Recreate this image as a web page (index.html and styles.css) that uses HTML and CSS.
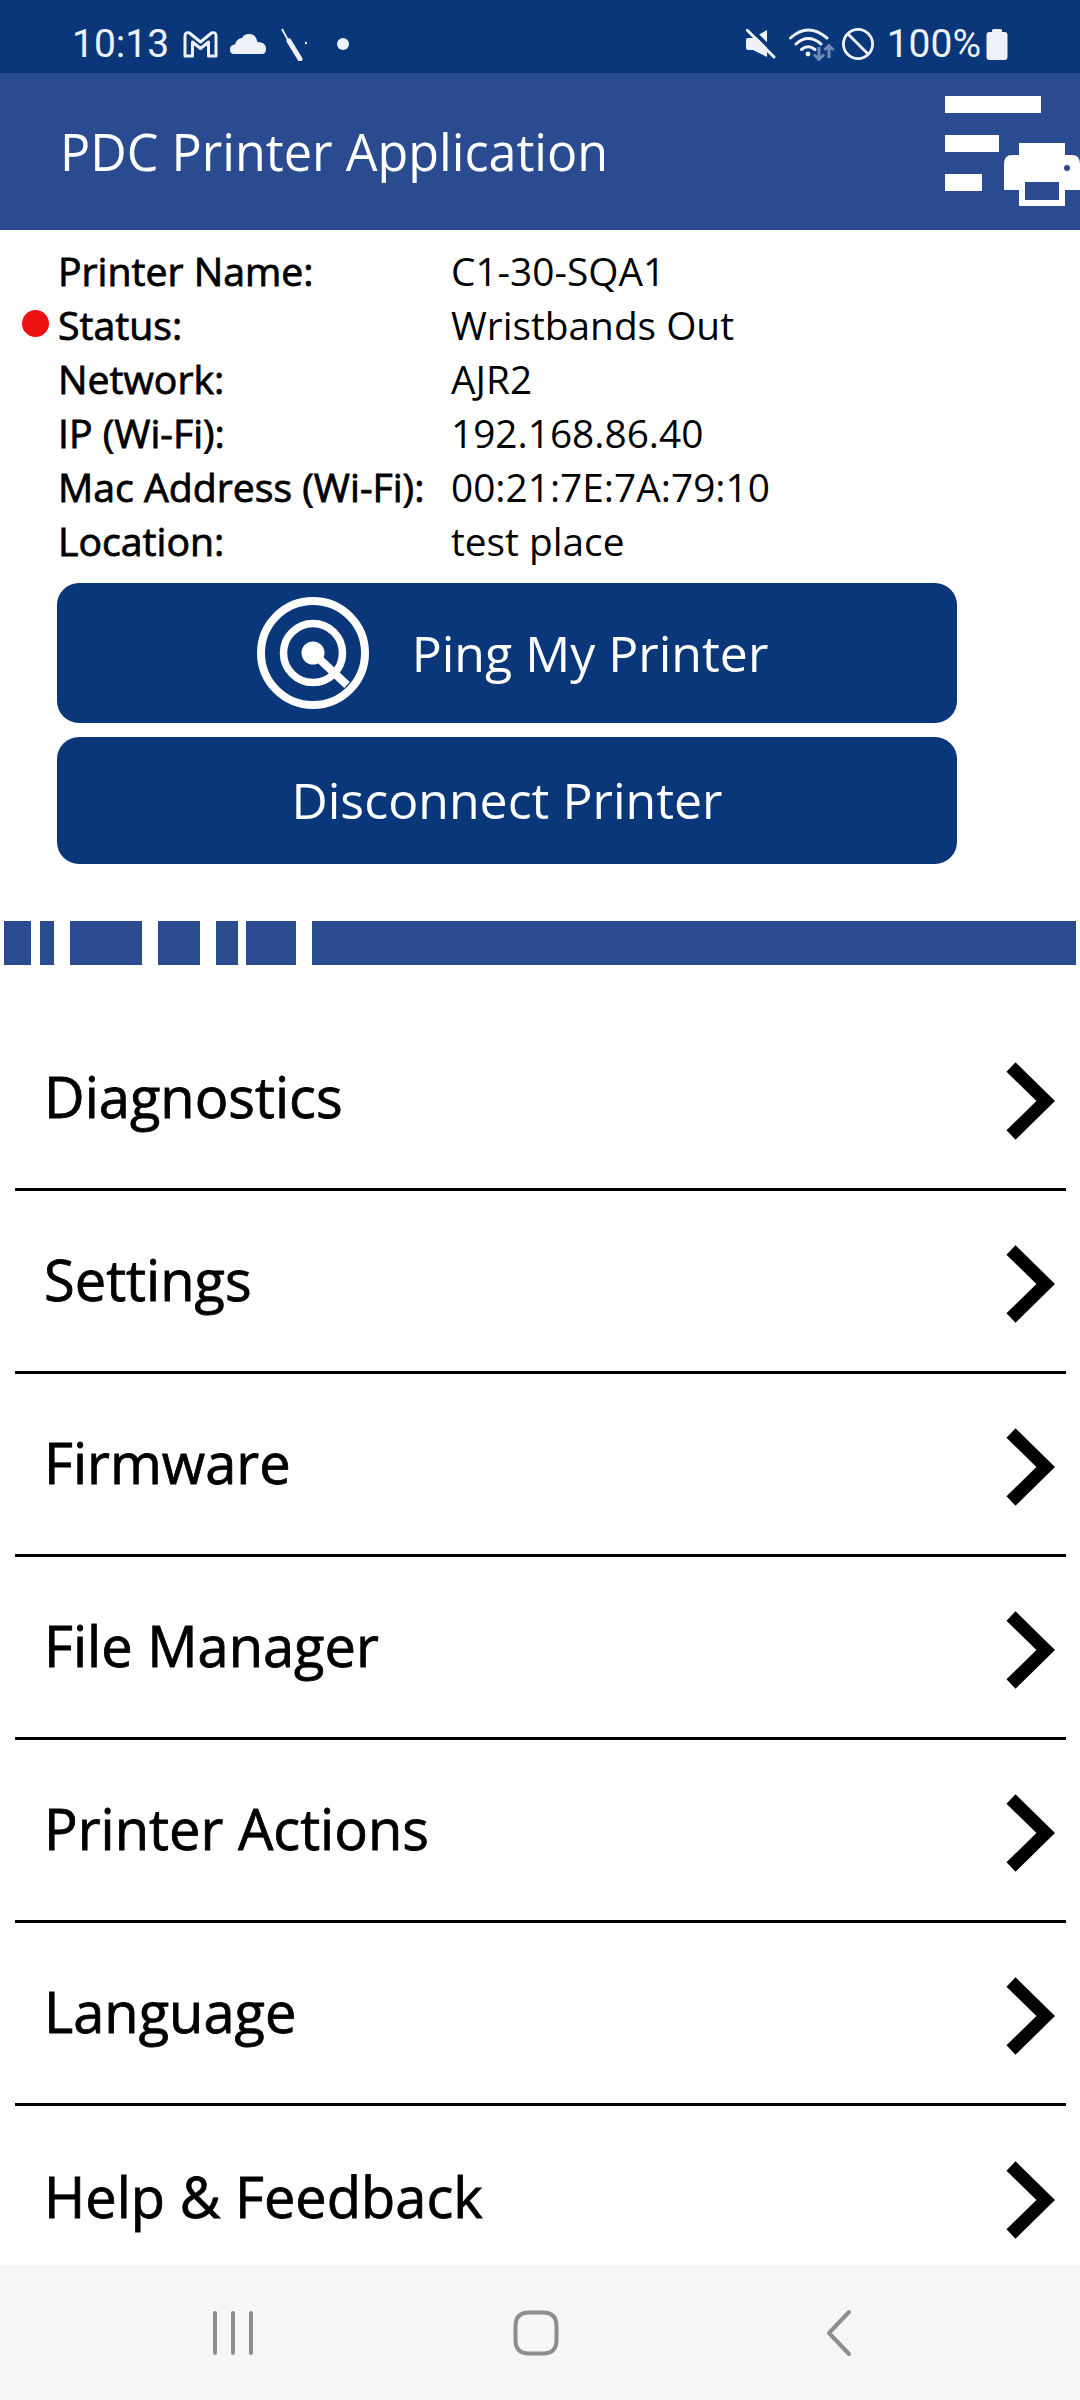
FILE: index.html
```html
<!DOCTYPE html>
<html lang="en">
<head>
<meta charset="utf-8">
<title>PDC Printer Application</title>
<link rel="stylesheet" href="styles.css">
</head>
<body>
<div class="screen">
  <div class="statusbar">
    <div class="status-group">
      <span class="clock">10:13</span>
      <svg class="si-mail" viewBox="0 0 35 28"><path d="M2 26V6Q2 1.500 6.500 3L17.500 12 28.500 3Q33 1.500 33 6V26H25.500V12L17.500 18.500 9.500 12V26Z" fill="none" stroke="#eef2f8" stroke-width="3" stroke-linejoin="round"/></svg>
      <svg class="si-cloud" viewBox="0 0 36 20"><path d="M4 20Q0 20 0 15.500Q0 11 5 10.500Q7 4 12 4Q14 0 19 0Q26 0 27.500 8Q36 8 36 15Q36 20 32 20Z" fill="#eef2f8"/></svg>
      <svg class="si-tool" viewBox="0 0 26 33"><path d="M1 1L8 14" stroke="#eef2f8" stroke-width="1.800"/><path d="M8 13L19 31" stroke="#eef2f8" stroke-width="5" stroke-linecap="round"/><circle cx="25" cy="15" r="1.200" fill="#eef2f8"/></svg>
      <span class="si-dot"></span>
    </div>
    <div class="status-group">
      <svg class="si-mute" viewBox="0 0 30 30"><path d="M0 11Q0 9 2 9H7L21 1V28L7 21H2Q0 21 0 19Z" fill="#eef2f8"/><path d="M5 0L33 28" stroke="#0a367a" stroke-width="4"/><path d="M1 1L28 28" stroke="#eef2f8" stroke-width="3" stroke-linecap="round"/></svg>
      <svg class="si-wifi" viewBox="0 0 46 34"><g fill="none" stroke="#eef2f8" stroke-width="3" stroke-linecap="round"><path d="M1.500 11Q19 -5 38 11"/><path d="M7 17Q19 6 32 17"/><path d="M12.500 22.500Q19 17 26 22.500"/></g><circle cx="19" cy="27" r="2.400" fill="#eef2f8"/><g fill="none" stroke="#6f8ab5" stroke-width="3"><path d="M30 20V33M25 27.500L30 32.500 35 27.500"/><path d="M40 31V18M35.500 23L40 18.500 44.500 23"/></g></svg>
      <svg class="si-block" viewBox="0 0 34 34"><circle cx="17" cy="17" r="14.600" fill="none" stroke="#eef2f8" stroke-width="2.800"/><path d="M7 7L27 27" stroke="#eef2f8" stroke-width="2.800"/></svg>
      <span class="battery-text">100%</span>
      <svg class="si-battery" viewBox="0 0 22 32"><path d="M6 2.500Q6 1 7.500 1H14.500Q16 1 16 2.500V4H18.500Q21.500 4 21.500 7V29Q21.500 32 18.500 32H3.500Q.5 32 .5 29V7Q.5 4 3.500 4H6Z" fill="#eef2f8"/></svg>
    </div>
  </div>

  <header class="appbar">
    <h1 class="app-title">PDC Printer Application</h1>
    <svg class="printer-menu" viewBox="0 0 135 110">
      <path d="M0 0H96V17H0ZM0 39H54V56H0ZM0 78H37V95H0Z" fill="#fff"/>
      <path d="M74 47H120V59H127Q135 59 135 68V94H120V110H74V94H59V68Q59 59 67 59H74Z" fill="#fff"/>
      <rect x="80" y="86" width="34" height="18" fill="#2a4b8f"/>
      <circle cx="122" cy="72" r="3" fill="#2a4b8f"/>
    </svg>
  </header>

  <section class="info">
    <div class="info-row"><span class="info-label">Printer Name:</span><span class="info-value">C1-30-SQA1</span></div>
    <div class="info-row"><span class="status-led"></span><span class="info-label">Status:</span><span class="info-value">Wristbands Out</span></div>
    <div class="info-row"><span class="info-label">Network:</span><span class="info-value">AJR2</span></div>
    <div class="info-row"><span class="info-label">IP (Wi-Fi):</span><span class="info-value">192.168.86.40</span></div>
    <div class="info-row"><span class="info-label">Mac Address (Wi-Fi):</span><span class="info-value">00:21:7E:7A:79:10</span></div>
    <div class="info-row"><span class="info-label">Location:</span><span class="info-value">test place</span></div>
  </section>

  <div class="actions">
    <button class="action action-ping" type="button">
      <svg class="ping-icon" viewBox="0 0 114 114"><g fill="none" stroke="#fff"><circle cx="57" cy="57" r="52" stroke-width="8"/><circle cx="57" cy="57" r="29.500" stroke-width="7.500"/><path d="M57 57L91 89" stroke-width="8"/></g><circle cx="57" cy="57" r="11.500" fill="#fff"/></svg>
      <span>Ping My Printer</span>
    </button>
    <button class="action action-disconnect" type="button"><span>Disconnect Printer</span></button>
  </div>

  <div class="barcode">
    <span class="bar bar-a"></span><span class="bar bar-b"></span><span class="bar bar-c"></span><span class="bar bar-d"></span><span class="bar bar-e"></span><span class="bar bar-f"></span><span class="bar bar-g"></span>
  </div>

  <nav class="menu">
    <a class="menu-row"><span>Diagnostics</span><svg class="chev" viewBox="0 0 52 78"><path d="M8 5L42.800 39 8 73" fill="none" stroke="#000" stroke-width="13"/></svg></a>
    <a class="menu-row"><span>Settings</span><svg class="chev" viewBox="0 0 52 78"><path d="M8 5L42.800 39 8 73" fill="none" stroke="#000" stroke-width="13"/></svg></a>
    <a class="menu-row"><span>Firmware</span><svg class="chev" viewBox="0 0 52 78"><path d="M8 5L42.800 39 8 73" fill="none" stroke="#000" stroke-width="13"/></svg></a>
    <a class="menu-row"><span>File Manager</span><svg class="chev" viewBox="0 0 52 78"><path d="M8 5L42.800 39 8 73" fill="none" stroke="#000" stroke-width="13"/></svg></a>
    <a class="menu-row"><span>Printer Actions</span><svg class="chev" viewBox="0 0 52 78"><path d="M8 5L42.800 39 8 73" fill="none" stroke="#000" stroke-width="13"/></svg></a>
    <a class="menu-row"><span>Language</span><svg class="chev" viewBox="0 0 52 78"><path d="M8 5L42.800 39 8 73" fill="none" stroke="#000" stroke-width="13"/></svg></a>
    <a class="menu-row"><span>Help &amp; Feedback</span><svg class="chev" viewBox="0 0 52 78"><path d="M8 5L42.800 39 8 73" fill="none" stroke="#000" stroke-width="13"/></svg></a>
  </nav>

  <div class="navbar">
    <svg class="nav-recents" viewBox="0 0 42 44"><path d="M3 2V42M21 2V42M39 2V42" stroke="#8e8e8e" stroke-width="4" stroke-linecap="round" fill="none"/></svg>
    <svg class="nav-home" viewBox="0 0 46 46"><path d="M16 2.500H30Q43.500 2.500 43.500 16V30Q43.500 43.500 30 43.500H16Q2.500 43.500 2.500 30V16Q2.500 2.500 16 2.500Z" fill="none" stroke="#8e8e8e" stroke-width="4"/></svg>
    <svg class="nav-back" viewBox="0 0 26 48"><path d="M23 3L3 24 23 45" fill="none" stroke="#8e8e8e" stroke-width="4" stroke-linecap="round" stroke-linejoin="round"/></svg>
  </div>
</div>
</body>
</html>
```

FILE: styles.css
```css
* { box-sizing: border-box; }
html, body { margin: 0; padding: 0; background: #fff; }
.screen {
  width: 1080px;
  height: 2400px;
  display: flex;
  flex-direction: column;
  overflow: hidden;
  font-family: "Open Sans", sans-serif;
  color: #000;
}
.statusbar {
  flex: 0 0 73px;
  background: #0a367a;
  color: #eef2f8;
  display: flex;
  justify-content: space-between;
  align-items: center;
  padding: 15px 72px 0;
  font-family: Roboto, sans-serif;
  font-size: 39px;
  line-height: 44px;
}
.status-group { display: flex; align-items: center; }
.clock { width: 111px; }
.si-mail { width: 35px; height: 28px; margin-right: 12px; }
.si-cloud { width: 36px; height: 20px; margin-right: 15px; }
.si-tool { width: 26px; height: 33px; margin-right: 30px; }
.si-dot { width: 12px; height: 12px; border-radius: 50%; background: #eef2f8; }
.si-mute { width: 30px; height: 30px; margin-right: 13px; }
.si-wifi { width: 46px; height: 34px; margin-right: 6px; }
.si-block { width: 34px; height: 34px; margin-right: 12px; }
.battery-text { margin-right: 5px; }
.si-battery { width: 22px; height: 32px; }

.appbar {
  flex: 0 0 157px;
  background: #2a4b8f;
  display: flex;
  justify-content: space-between;
  align-items: flex-start;
  padding-left: 60px;
}
.app-title {
  margin: 46px 0 0;
  font-size: 50.300px;
  line-height: 65px;
  font-weight: 400;
  color: #fff;
}
.printer-menu { width: 135px; height: 110px; margin-top: 23px; }

.info { padding: 14px 0 0 58px; }
.info-row {
  position: relative;
  display: flex;
  height: 54px;
  align-items: center;
  font-size: 38.800px;
  line-height: 54px;
}
.info-label { width: 393px; font-size: 39.200px; -webkit-text-stroke: .8px #000; }
.status-led {
  position: absolute;
  left: -36px;
  top: 12px;
  width: 27px;
  height: 27px;
  border-radius: 50%;
  background: #ee1111;
}

.actions {
  display: flex;
  flex-direction: column;
  gap: 14px;
  margin: 15px 0 0 57px;
  width: 900px;
}
.action {
  display: flex;
  align-items: center;
  justify-content: center;
  background: #0a367a;
  color: #fff;
  border: 0;
  border-radius: 22px;
  padding: 0;
  font-family: "Open Sans", sans-serif;
  font-size: 50px;
}
.action-ping { height: 140px; gap: 42px; padding-left: 10px; }
.action-disconnect { height: 127px; padding-bottom: 2px; }
.ping-icon { width: 114px; height: 114px; }

.barcode { display: flex; height: 44px; margin: 57px 0 0 4px; }
.bar { background: #2a4b8f; height: 100%; }
.bar-a { width: 27px; margin-right: 9px; }
.bar-b { width: 14px; margin-right: 16px; }
.bar-c { width: 72px; margin-right: 16px; }
.bar-d { width: 42px; margin-right: 16px; }
.bar-e { width: 22px; margin-right: 8px; }
.bar-f { width: 50px; margin-right: 16px; }
.bar-g { width: 764px; }

.menu { flex: 1; margin-top: 43px; padding: 0 14px 0 15px; overflow: hidden; min-height: 0; }
.menu-row {
  display: flex;
  height: 183px;
  align-items: center;
  justify-content: space-between;
  padding: 0 11px 4px 29px;
  border-bottom: 3px solid #000;
  font-size: 56px;
  -webkit-text-stroke: .8px #000;
}
.menu-row:last-child { border-bottom: 0; }
.chev { width: 52px; height: 78px; margin-top: 9px; }

.navbar {
  flex: 0 0 135px;
  background: #f6f6f6;
  display: flex;
  align-items: center;
  padding-left: 212px;
}
.nav-recents { width: 42px; height: 44px; margin-right: 259px; }
.nav-home { width: 46px; height: 46px; margin-right: 267px; }
.nav-back { width: 26px; height: 48px; }
```
